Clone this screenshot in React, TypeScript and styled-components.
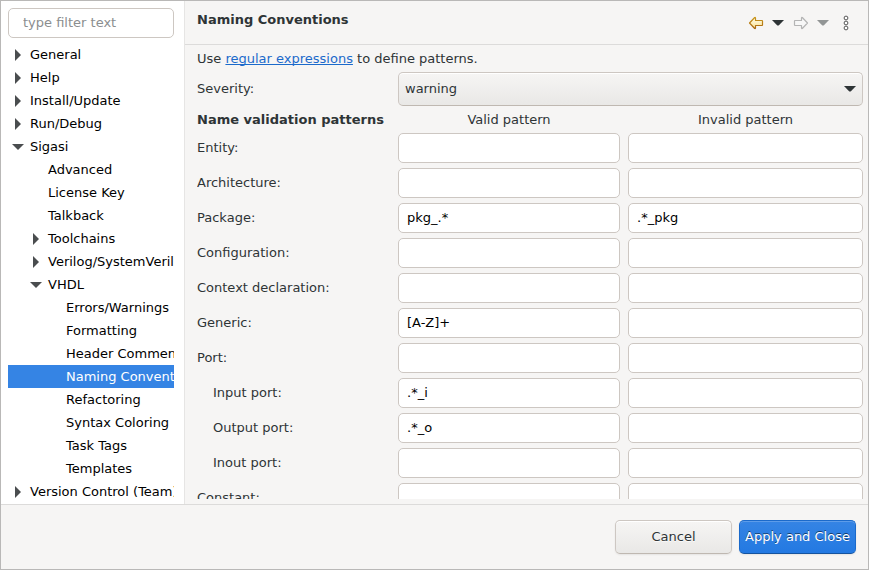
import React, { useState } from "react";
import styled, { createGlobalStyle, css } from "styled-components";

const GlobalStyle = createGlobalStyle`
  * { box-sizing: border-box; }
  body { margin: 0; }
  body, button, input, select {
    font-family: "DejaVu Sans", Verdana, sans-serif;
    font-size: 13px;
    line-height: 17px;
  }
`;

const Dialog = styled.div`
  display: flex;
  flex-direction: column;
  height: 100vh;
  border: 1px solid #b9b8b7;
  background: #f6f5f4;
  color: #2e3436;
`;

const Body = styled.div`
  display: flex;
  flex: 1;
  min-height: 0;
`;

const Sidebar = styled.aside`
  display: flex;
  flex-direction: column;
  gap: 5px;
  flex: 0 0 184px;
  min-width: 0;
  padding: 7px 10px 0 7px;
  border-right: 1px solid #e6e5e4;
  background: #fff;
`;

const fieldStyle = css`
  width: 100%;
  min-width: 0;
  height: 30px;
  border: 1px solid #cdc7c2;
  border-radius: 5px;
  background: #fff;
  color: #000;
  outline: none;
  &:focus-visible { border-color: #3584e4; }
`;

const FilterInput = styled.input`
  ${fieldStyle}
  flex: none;
  padding: 0 14px 2px;
  &::placeholder { color: #8b8e8f; opacity: 1; }
`;

const Tree = styled.ul`
  flex: 1;
  min-height: 0;
  margin: 0;
  padding: 0;
  overflow: hidden;
  list-style: none;
`;

const TreeRow = styled.button<{ $level: number; $selected: boolean }>`
  display: flex;
  align-items: center;
  gap: 2px;
  width: 100%;
  height: 23px;
  padding: 0 0 0 ${(p) => p.$level * 18}px;
  border: 0;
  overflow: hidden;
  white-space: nowrap;
  text-align: left;
  background: ${(p) => (p.$selected ? "#3584e4" : "transparent")};
  color: ${(p) => (p.$selected ? "#fff" : "#000")};
`;

const Expander = styled.svg`
  flex: none;
  width: 20px;
  height: 16px;
  fill: #4a4d4f;
`;

const Page = styled.main`
  display: flex;
  flex-direction: column;
  flex: 1;
  min-width: 0;
`;

const PageHeader = styled.header`
  display: flex;
  justify-content: space-between;
  flex: none;
  height: 44px;
  padding: 10px 11px 0 12px;
  border-bottom: 1px solid #dcdbda;
`;

const Title = styled.h1`
  margin: 0;
  font-size: 13px;
  line-height: 17px;
`;

const Toolbar = styled.div`
  display: flex;
  align-items: flex-start;
  gap: 4px;
`;

const ToolButton = styled.button`
  display: flex;
  align-items: center;
  justify-content: center;
  width: 22px;
  height: 24px;
  padding: 0;
  border: 0;
  background: none;
`;

const HistoryButton = styled(ToolButton)`
  justify-content: flex-start;
  width: 15px;
  padding-left: 1px;
`;

const Content = styled.form`
  flex: 1;
  display: grid;
  grid-template-columns: 193px minmax(0, 222fr) minmax(0, 235fr);
  grid-auto-rows: max-content;
  align-content: start;
  gap: 5px 8px;
  min-height: 0;
  margin: 5px 5px 5px 12px;
  overflow: hidden;
`;

const Intro = styled.p`
  grid-column: 1 / -1;
  margin: 0;
`;

const Link = styled.a`
  color: #1b6acb;
  text-decoration-skip-ink: none;
`;

const Label = styled.label<{ $indent?: boolean }>`
  align-self: center;
  padding: 0 0 2px ${(p) => (p.$indent ? 16 : 0)}px;
`;

const SectionTitle = styled.h2`
  margin: 0;
  font-size: 13px;
  line-height: 17px;
  white-space: nowrap;
`;

const ColumnTitle = styled.div`
  text-align: center;
`;

const raised = css`
  border: 1px solid #cdc7c2;
  border-bottom-color: #bfb8b1;
  border-radius: 5px;
  background: linear-gradient(#f6f5f4, #e9e8e6);
  box-shadow: inset 0 1px #fff;
  color: #2e3436;
`;

const SelectBox = styled.div`
  grid-column: 2 / -1;
  display: grid;
  align-items: center;
  & > * { grid-area: 1 / 1; }
  & > svg { justify-self: end; margin-right: 7px; pointer-events: none; }
`;

const Select = styled.select`
  ${raised}
  appearance: none;
  width: 100%;
  height: 34px;
  padding: 0 24px 2px 6px;
`;

const Field = styled.input`
  ${fieldStyle}
  padding: 0 8px 2px;
`;

const Footer = styled.footer`
  display: flex;
  justify-content: flex-end;
  gap: 7px;
  padding: 15px 12px;
  border-top: 1px solid #dcdbda;
`;

const ActionButton = styled.button<{ $primary?: boolean }>`
  ${raised}
  width: 117px;
  height: 34px;
  padding: 0 0 2px;
  white-space: nowrap;
  box-shadow: inset 0 1px #fff, 0 1px 2px rgba(0, 0, 0, 0.07);
  text-shadow: 0 1px rgba(255, 255, 255, 0.77);
  ${(p) =>
    p.$primary &&
    css`
      border-color: #1b6acb;
      border-bottom-color: #15539e;
      background: linear-gradient(#3584e4, #2379e2);
      box-shadow: inset 0 1px rgba(255, 255, 255, 0.2), 0 1px 2px rgba(0, 0, 0, 0.07);
      color: #fff;
      text-shadow: 0 -1px rgba(0, 0, 0, 0.55);
    `}
`;

function Caret({ color = "#2e3436" }: { color?: string }) {
  return (
    <svg width="12" height="6" viewBox="0 0 12 6" aria-hidden="true">
      <path d="M0 0H12L7.2 5Q6 6 4.8 5Z" fill={color} />
    </svg>
  );
}

function Arrow({ forward = false }: { forward?: boolean }) {
  return (
    <svg width="16" height="14" viewBox="0 0 16 14" aria-hidden="true">
      <defs>
        <linearGradient id="backFill" x1="0" y1="0" x2="0" y2="1">
          <stop offset="0" stopColor="#fffef0" />
          <stop offset="1" stopColor="#fbe18c" />
        </linearGradient>
        <linearGradient id="backStroke" x1="0" y1="0" x2="0" y2="1">
          <stop offset="0" stopColor="#c9971c" />
          <stop offset="1" stopColor="#a96712" />
        </linearGradient>
      </defs>
      <path
        d={
          forward
            ? "M14.5 7L9.3 1.5Q8.5 1.2 8.5 2V4.5H2Q1.5 4.5 1.5 5V9Q1.5 9.5 2 9.5H8.5V12Q8.5 12.8 9.3 12.5Z"
            : "M1.5 7L6.7 1.5Q7.5 1.2 7.5 2V4.5H14Q14.5 4.5 14.5 5V9Q14.5 9.5 14 9.5H7.5V12Q7.5 12.8 6.7 12.5Z"
        }
        fill={forward ? "#f7f7f7" : "url(#backFill)"}
        stroke={forward ? "#b4b4b4" : "url(#backStroke)"}
        strokeWidth="1.2"
        strokeLinejoin="round"
      />
    </svg>
  );
}

function Dots() {
  return (
    <svg width="6" height="16" viewBox="0 0 6 16" fill="#fff" stroke="#555" aria-hidden="true">
      <circle cx="3" cy="3" r="1.9" />
      <circle cx="3" cy="8" r="1.9" />
      <circle cx="3" cy="13" r="1.9" />
    </svg>
  );
}

type Item = { name: string; level: number; state?: "open" | "closed" };

const items: Item[] = [
  { name: "General", level: 0, state: "closed" },
  { name: "Help", level: 0, state: "closed" },
  { name: "Install/Update", level: 0, state: "closed" },
  { name: "Run/Debug", level: 0, state: "closed" },
  { name: "Sigasi", level: 0, state: "open" },
  { name: "Advanced", level: 1 },
  { name: "License Key", level: 1 },
  { name: "Talkback", level: 1 },
  { name: "Toolchains", level: 1, state: "closed" },
  { name: "Verilog/SystemVerilog", level: 1, state: "closed" },
  { name: "VHDL", level: 1, state: "open" },
  { name: "Errors/Warnings", level: 2 },
  { name: "Formatting", level: 2 },
  { name: "Header Comment", level: 2 },
  { name: "Naming Conventions", level: 2 },
  { name: "Refactoring", level: 2 },
  { name: "Syntax Coloring", level: 2 },
  { name: "Task Tags", level: 2 },
  { name: "Templates", level: 2 },
  { name: "Version Control (Team)", level: 0, state: "closed" },
];

type Pattern = { name: string; valid?: string; invalid?: string; indent?: boolean };

const patterns: Pattern[] = [
  { name: "Entity" },
  { name: "Architecture" },
  { name: "Package", valid: "pkg_.*", invalid: ".*_pkg" },
  { name: "Configuration" },
  { name: "Context declaration" },
  { name: "Generic", valid: "[A-Z]+" },
  { name: "Port" },
  { name: "Input port", valid: ".*_i", indent: true },
  { name: "Output port", valid: ".*_o", indent: true },
  { name: "Inout port", indent: true },
  { name: "Constant" },
];

export default function App() {
  const [selected, setSelected] = useState("Naming Conventions");

  return (
    <>
      <GlobalStyle />
      <Dialog>
        <Body>
          <Sidebar>
            <FilterInput type="text" placeholder="type filter text" aria-label="Filter preferences" />
            <Tree>
              {items.map((item) => (
                <li key={item.name}>
                  <TreeRow
                    type="button"
                    $level={item.level}
                    $selected={item.name === selected}
                    aria-expanded={item.state && item.state === "open"}
                    onClick={() => setSelected(item.name)}
                  >
                    <Expander viewBox="0 0 20 16" aria-hidden="true">
                      {item.state === "closed" && <path d="M7 2L13 8L7 14Z" />}
                      {item.state === "open" && <path d="M4 5H16L10 11Z" />}
                    </Expander>
                    {item.name}
                  </TreeRow>
                </li>
              ))}
            </Tree>
          </Sidebar>
          <Page>
            <PageHeader>
              <Title>Naming Conventions</Title>
              <Toolbar>
                <ToolButton type="button" aria-label="Back"><Arrow /></ToolButton>
                <HistoryButton type="button" aria-label="Back history"><Caret /></HistoryButton>
                <ToolButton type="button" aria-label="Forward" disabled><Arrow forward /></ToolButton>
                <HistoryButton type="button" aria-label="Forward history" disabled><Caret color="#929595" /></HistoryButton>
                <ToolButton type="button" aria-label="More options"><Dots /></ToolButton>
              </Toolbar>
            </PageHeader>
            <Content onSubmit={(e) => e.preventDefault()}>
              <Intro>
                Use <Link href="#regular-expressions">regular expressions</Link> to define patterns.
              </Intro>
              <Label htmlFor="severity">Severity:</Label>
              <SelectBox>
                <Select id="severity" defaultValue="warning">
                  <option>error</option>
                  <option>warning</option>
                  <option>info</option>
                  <option>ignore</option>
                </Select>
                <Caret />
              </SelectBox>
              <SectionTitle>Name validation patterns</SectionTitle>
              <ColumnTitle>Valid pattern</ColumnTitle>
              <ColumnTitle>Invalid pattern</ColumnTitle>
              {patterns.map((p) => {
                const id = p.name.toLowerCase().replace(" ", "-");
                return (
                  <React.Fragment key={id}>
                    <Label htmlFor={id} $indent={p.indent}>{p.name}:</Label>
                    <Field id={id} type="text" defaultValue={p.valid} />
                    <Field type="text" defaultValue={p.invalid} aria-label={`${p.name} invalid pattern`} />
                  </React.Fragment>
                );
              })}
            </Content>
          </Page>
        </Body>
        <Footer>
          <ActionButton type="button">Cancel</ActionButton>
          <ActionButton type="button" $primary>Apply and Close</ActionButton>
        </Footer>
      </Dialog>
    </>
  );
}
